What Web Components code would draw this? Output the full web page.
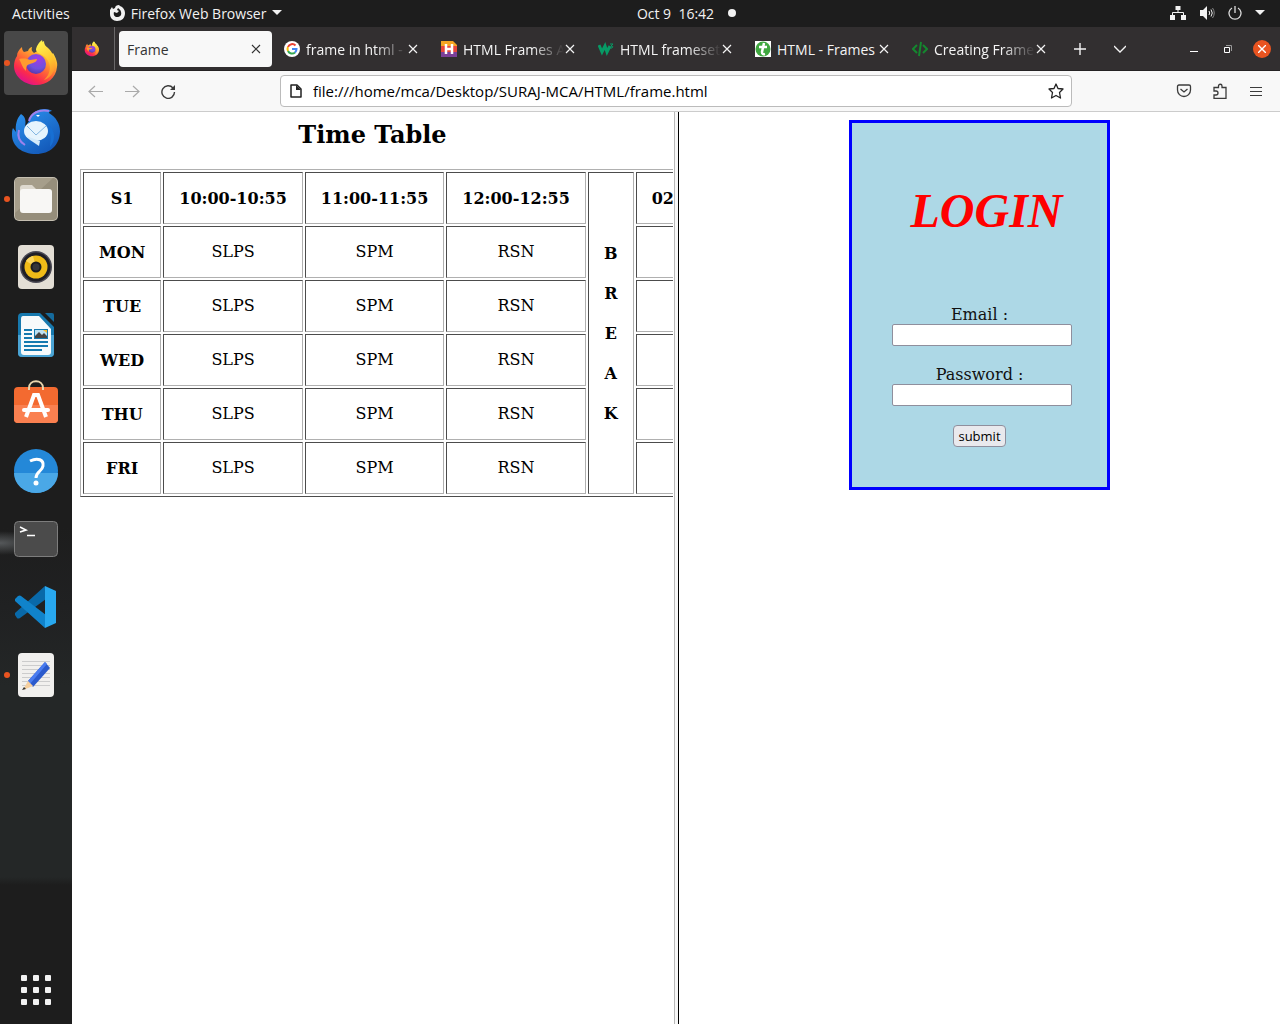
<!DOCTYPE html>
<html lang="en">
<head>
<meta charset="utf-8">
<title>Frame</title>
<style>
html,body{margin:0;height:100%}
body{font-family:"Open Sans","Noto Sans",sans-serif;font-size:14px;overflow:hidden;background:#fff}
</style>
</head>
<body>
<desk-top></desk-top>
<script>
const define = (name, html) => {
  const t = document.createElement('template');
  t.innerHTML = `<style>*{box-sizing:border-box}button{font:inherit;color:inherit;background:none;border:0;padding:0;margin:0}svg{display:block;flex:none}</style>` + html;
  customElements.define(name, class extends HTMLElement {
    constructor() {
      super();
      this.attachShadow({mode: 'open'}).append(t.content.cloneNode(true));
    }
  });
};

const fox = (id, size) => `<svg width="${size}" height="${size}" viewBox="0 0 48 48" aria-hidden="true">
<defs><linearGradient id="${id}a" x1=".8" y1=".05" x2=".25" y2=".95"><stop offset="0" stop-color="#fff44f"/><stop offset=".3" stop-color="#ffb62e"/><stop offset=".55" stop-color="#ff6b35"/><stop offset=".8" stop-color="#fb2b4c"/><stop offset="1" stop-color="#e0118c"/></linearGradient>
<radialGradient id="${id}b" cx=".6" cy=".25" r=".8"><stop offset="0" stop-color="#a13ae6"/><stop offset=".6" stop-color="#6f51dc"/><stop offset="1" stop-color="#5436a8"/></radialGradient>
<linearGradient id="${id}c" x1=".3" y1="0" x2=".6" y2="1"><stop offset="0" stop-color="#fff44f"/><stop offset=".6" stop-color="#ffc22e"/><stop offset="1" stop-color="#ff8a2c"/></linearGradient></defs>
<g transform="translate(1 -1)"><path fill="url(#${id}a)" d="M4 18C4 14 6 12 9 9c0 3 1 4 2 5l4-1c1-3 3-4 4-4-1 3 0 4 2 6l5-3c0-4 3-8 5-9 0 6 5 8 8 13l1-1c3 5 5 10 4 14-1 11-10 18-21 18S1 39 1 28c0-4 1-7 3-10z"/>
<path fill="url(#${id}c)" d="M29 2c1 6 7 7 10 13 6 11 3 23-8 27 7-6 8-16 2-22-3-4-9-4-10-8 0-3 3-8 6-10z"/>
<circle cx="23" cy="26" r="10" fill="url(#${id}b)"/>
<path fill="#ff9b2f" d="M6 21c5-1 9 0 11 1l7-1c0 3-4 4-7 5-4 1-4 4-4 7-4-4-4-7-7-12z"/></g></svg>`;

const closeX = `<svg width="10" height="10" viewBox="0 0 10 10" fill="none" stroke="currentColor" stroke-width="1.200"><path d="M1 1l8 8M9 1L1 9"/></svg>`;

define('top-bar', `<style>
:host{display:grid;grid-template-columns:1fr auto 1fr;align-items:center;height:27px;background:#1d1d1d;color:#f2f2f2;padding:0 15px 1px 12px}
div{display:flex;align-items:center}
.l{gap:39px}.app{display:flex;align-items:center;gap:6px}
.c{gap:14px;padding-left:96px}.c time{white-space:pre}.dot{width:8px;height:8px;border-radius:50%;background:#f2f2f2}
.r{justify-content:flex-end;gap:13px}
</style>
<div class="l"><button>Activities</button><button class="app"><svg width="16" height="16" viewBox="0 0 16 16"><path fill="#f2f2f2" fill-rule="evenodd" d="M1 5l2-3 1 2 2-1C6 1 8 0 10 0l1 1c3 1 5 4 5 7 0 5-3 8-8 8-4 0-7-3-7-7zM5 7c-1 3 1 5 3 5 3 0 5-2 4-5 0-2-2-3-3-4L8 5l2 1-2 2z"/></svg>Firefox Web Browser<svg width="10" height="6" viewBox="0 0 10 6"><path fill="#f2f2f2" d="M0 0h10L5 5z"/></svg></button></div>
<div class="c"><time>Oct 9  16:42</time><span class="dot"></span></div>
<div class="r">
<svg width="16" height="14" viewBox="0 0 16 14"><path fill="#f2f2f2" d="M5.500 0h5v4h-5zM0 9h5v5H0zM11 9h5v5h-5z"/><path fill="none" stroke="#f2f2f2" d="M8 4v3M2.500 9V6.500h11V9"/></svg>
<svg width="16" height="14" viewBox="0 0 16 14"><path fill="#f2f2f2" d="M1 4h3l4-4v14l-4-4H1z"/><path fill="none" stroke="#f2f2f2" d="M10 5q1.500 2 0 4M12 3.500q2.500 3.500 0 7" /><path fill="none" stroke="#888" d="M13.500 2q3.500 5 0 10"/></svg>
<svg width="14" height="14" viewBox="0 0 14 14" fill="none" stroke="#ddd" stroke-width="1.300"><path d="M4 2a6 6 0 1 0 6 0M7 0v7"/></svg>
<svg width="10" height="6" viewBox="0 0 10 6"><path fill="#f2f2f2" d="M0 0h10L5 5z"/></svg></div>`);

define('dock-item', `<style>
:host{display:block}
button{position:relative;display:flex;align-items:center;justify-content:center;width:64px;height:64px;border-radius:4px}
:host([active]) button{background:#484848}
:host([running]) button::before{content:"";position:absolute;left:0;top:29px;width:6px;height:6px;border-radius:50%;background:#e95420}
</style><button><slot></slot></button>`);

define('dock-bar', `<style>
:host{display:flex;flex-direction:column;gap:4px;padding:4px;width:72px;background:radial-gradient(ellipse 44px 12px at 0 516px,#55585a,transparent),linear-gradient(#1d1d1d 0 500px,#202122 580px,#242727 660px,#242727 850px,#1d1d1d 858px)}
.sp{flex:1}
dock-item:last-child{margin-bottom:-2px}
</style>
<dock-item active running>${fox('d', 48)}</dock-item>
<dock-item><svg width="48" height="48" viewBox="0 0 48 48"><defs><linearGradient id="tb" x2=".7" y2="1"><stop offset="0" stop-color="#2d97f3"/><stop offset="1" stop-color="#1358b8"/></linearGradient></defs><g transform="translate(0 1)"><path fill="url(#tb)" d="M9 6c5 3 5 8 4 13l4-6C19 4 26 1 33 1c3 0 6 1 7 2-2 0-3 1-3 2 7 4 11 11 11 18 0 14-10 23-24 23S0 38 0 27c0-3 0-5 1-7l3 4C3 17 5 10 9 6z"/><path fill="none" stroke="#9d82ec" stroke-width="2" d="M17 13c2-8 10-12 20-10M7 22c-2 7 1 12 6 15"/><path fill="#fff" d="M24 7h4l-2 2z"/><ellipse cx="24" cy="23" rx="12" ry="10" fill="#e6f4fd"/><path fill="#d3eafa" d="M14 28l14 5-1 5-9-6z"/><path stroke="#83b6e1" fill="none" d="M15 18l9 9 10-9"/><path fill="#176fd3" d="M37 17c6 6 7 15 1 22 0-5 2-11-1-16z"/></g></svg></dock-item>
<dock-item running><svg width="44" height="44" viewBox="0 0 44 44"><rect width="44" height="44" rx="5" fill="#c5bfb1"/><rect x="1" y="1" width="42" height="42" rx="4" fill="#968e7b"/><path fill="#a69e8b" d="M1 36V5q0-4 4-4h34z"/><path fill="#ded9cf" d="M6 24V11q0-3 3-3h9l4 4v10z"/><rect x="6" y="12" width="32" height="24" rx="3" fill="#f8f7f5"/></svg></dock-item>
<dock-item><svg width="36" height="44" viewBox="0 0 36 44"><rect width="36" height="44" rx="4" fill="#e3ded5"/><circle cx="18" cy="22" r="16" fill="#4a4954"/><circle cx="18" cy="22" r="14.500" fill="#1f1e25"/><circle cx="18" cy="22" r="11.500" fill="#f0bb18"/><path fill="#fbd65e" d="M18 22L8 16a11.500 11.500 0 0 1 7-5z"/><circle cx="18" cy="22" r="5.500" fill="#1c1c1f"/><circle cx="18" cy="22" r="3.500" fill="#34353a"/></svg></dock-item>
<dock-item><svg width="36" height="44" viewBox="0 0 36 44"><path fill="#1779ae" d="M4 0h18l14 14v26q0 4-4 4H4q-4 0-4-4V4q0-4 4-4z"/><path fill="#4ba4d4" d="M0 22h36v18q0 4-4 4H4q-4 0-4-4z"/><path fill="#f7fafb" d="M5 3h16l12 13v23q0 3-3 3H6q-3 0-3-3V6q0-3 2-3z"/><path fill="#156b9d" d="M27 0h7q2 0 2 2v7z"/><path stroke="#1479af" stroke-width="2" d="M6 17h8M6 21h8M6 25h8M6 29h24M6 33h24M6 37h18"/><path fill="#1479af" d="M16 16h14v10H16z"/><path fill="#bce1f3" d="M17 17h12v8H17z"/><path fill="#444" d="M17 25v-2l4-4 3 3 2-2 3 3v2z"/><path fill="#f7bd31" d="M25 17h4v3z"/></svg></dock-item>
<dock-item><svg width="44" height="48" viewBox="0 0 44 48"><path fill="#f36a30" d="M4 8h36q4 0 4 4v28q0 4-4 4H4q-4 0-4-4V12q0-4 4-4z"/><path fill="#fa8050" d="M0 26h44v14q0 4-4 4H4q-4 0-4-4z"/><path fill="none" stroke="#ead6ae" stroke-width="2" d="M15 11v-2c0-9 14-9 14 0v2"/><path fill="none" stroke="#fff" stroke-width="4" d="M12 38l8-22h4l8 22"/><path stroke="#fff" stroke-width="4" stroke-linecap="round" d="M10 31h24"/></svg></dock-item>
<dock-item><svg width="44" height="44" viewBox="0 0 44 44"><circle cx="22" cy="22" r="22" fill="#2488d8"/><path fill="#4aa8e7" d="M0 24h44a22 20 0 0 1-44 0"/><path fill="none" stroke="#fff" stroke-width="3" d="M16 12c8-4 14-1 13 5s-7 5-7 12"/><circle cx="22" cy="34" r="2.500" fill="#fff"/></svg></dock-item>
<dock-item><svg width="44" height="36" viewBox="0 0 44 36"><rect x=".5" y=".5" width="43" height="35" rx="4" fill="#4b4b4b" stroke="#7d7d7d"/><path fill="none" stroke="#fff" stroke-width="1.600" d="M6 6l6 3-6 2M13 14.500h8"/></svg></dock-item>
<dock-item><svg width="44" height="42" viewBox="0 0 44 42"><path fill="#0969a9" d="M1 27l30-27 1 13L6 32q-2 1-3 0l-2-3z"/><path fill="#1083cb" d="M1 13l3-3q2-1 3 0l25 19-1 13L1 15z"/><path fill="#28a8ef" d="M31 0l11 5v32l-11 5z"/></svg></dock-item>
<dock-item running><svg width="36" height="44" viewBox="0 0 36 44"><rect width="36" height="44" rx="4" fill="#f1f0ee"/><path stroke="#ccc" d="M4 8.500h28M4 12.500h28M4 16.500h28M4 20.500h28M4 24.500h28M4 28.500h28M4 32.500h28"/><path fill="#2b5acc" d="M10 28L27 9l5 6-17 19z"/><path fill="#4a7cf0" d="M10 28L27 9l2 2-17 20z"/><path fill="#f5cf9f" d="M10 28l5 5-10 4z"/><path fill="#333" d="M6 34l2 2-4 1z"/></svg></dock-item>
<span class="sp"></span>
<dock-item><svg width="30" height="30" viewBox="0 0 30 30" fill="#f2f2f2"><rect width="6" height="6" rx="1"/><rect x="12" width="6" height="6" rx="1"/><rect x="24" width="6" height="6" rx="1"/><rect y="12" width="6" height="6" rx="1"/><rect x="12" y="12" width="6" height="6" rx="1"/><rect x="24" y="12" width="6" height="6" rx="1"/><rect y="24" width="6" height="6" rx="1"/><rect x="12" y="24" width="6" height="6" rx="1"/><rect x="24" y="24" width="6" height="6" rx="1"/></svg></dock-item>`);

define('browser-tab', `<style>
:host{display:flex;align-items:center;gap:6px;flex:0 1 153px;min-width:0;height:36px;padding:0 11px 0 8px;border-radius:4px;color:#f4f4f4}
:host([active]){background:#f8f8f8;color:#333}
.t{flex:1;min-width:0;padding-top:1px;overflow:hidden;white-space:nowrap;-webkit-mask-image:linear-gradient(to left,transparent 0,#000 32px);mask-image:linear-gradient(to left,transparent 0,#000 32px)}
:host([whole]) .t{-webkit-mask-image:none;mask-image:none}
button{margin-left:-5px}
</style><slot name="icon"></slot><span class="t"><slot></slot></span><button aria-label="Close tab">${closeX}</button>`);

define('tab-strip', `<style>
:host{display:flex;align-items:center;height:44px;background:#322f30;color:#f4f4f4;padding-right:9px;border-bottom:1px solid #242223}
.pin{width:43px;height:43px;padding:0 15px 0 12px;border-right:1px solid #6a6869;display:flex;align-items:center;flex:none}
.tabs{display:flex;gap:4px;flex:0 1 942px;min-width:0;padding-left:4px}
.ctl{display:flex;align-items:center;gap:28px;margin-left:17px}
.win{display:flex;align-items:center;gap:17px;margin-left:auto}
.x{display:flex;align-items:center;justify-content:center;width:18px;height:18px;border-radius:50%;background:#e95420}
</style>
<div class="pin">${fox('p', 16)}</div>
<div class="tabs">
<browser-tab active whole>Frame</browser-tab>
<browser-tab><svg slot="icon" width="16" height="16" viewBox="0 0 16 16"><circle cx="8" cy="8" r="8" fill="#fff"/><g fill="none" stroke-width="2"><path stroke="#ea4335" d="M4 6a4.500 4.500 0 0 1 7.500-1.500"/><path stroke="#fbbc05" d="M4 10a4.500 4.500 0 0 1 0-4"/><path stroke="#34a853" d="M4 10a4.500 4.500 0 0 0 7 1.500"/><path stroke="#4285f4" d="M8 8h4.500q0 2-1.500 3.500"/></g></svg>frame in html - Google</browser-tab>
<browser-tab><svg slot="icon" width="16" height="16" viewBox="0 0 16 16"><path fill="#f6a623" d="M0 0h12l4 4v1H0z"/><path fill="#e8483b" d="M0 5h16v6H0z"/><path fill="#7b3f98" d="M0 11h16v5H0z"/><path fill="none" stroke="#fff" stroke-width="2.500" d="M5 3v10M11 3v10M5 8h6"/></svg>HTML Frames And</browser-tab>
<browser-tab><svg slot="icon" width="16" height="16" viewBox="0 0 16 16"><path fill="none" stroke="#079a65" stroke-width="3" d="M1 4l3 7 3-6 2 6 3-6"/><path fill="none" stroke="#079a65" d="M12 3h3l-2 2q3 0 1 2h-2"/></svg>HTML frameset tag</browser-tab>
<browser-tab whole><svg slot="icon" width="16" height="16" viewBox="0 0 16 16"><path fill="#fff" d="M0 0h16v16H0z"/><circle cx="8" cy="8" r="7.500" fill="#3fa73f"/><path fill="none" stroke="#fff" stroke-width="2.500" d="M9 2L7 11q0 3 3 2M4 6h8"/></svg>HTML - Frames</browser-tab>
<browser-tab><svg slot="icon" width="16" height="16" viewBox="0 0 16 16" fill="none" stroke="#14882f" stroke-width="2"><path d="M5 4L1 8l4 4M11 4l4 4-4 4M9 1L7 15"/></svg>Creating Frames</browser-tab>
</div>
<div class="ctl"><button aria-label="New tab"><svg width="12" height="12" viewBox="0 0 12 12"><path stroke="currentColor" stroke-width="1.400" d="M6 0v12M0 6h12"/></svg></button><button aria-label="List tabs"><svg width="12" height="8" viewBox="0 0 12 8"><path fill="none" stroke="currentColor" stroke-width="1.300" d="M0 1l6 6 6-6"/></svg></button></div>
<div class="win"><button aria-label="Minimise"><svg width="16" height="8" viewBox="0 0 16 8"><path stroke="#fff" d="M3 6.500h8"/></svg></button><button aria-label="Restore"><svg width="16" height="8" viewBox="0 0 16 8"><path fill="none" stroke="#fff" d="M4.500 2.500h5v5h-5z"/><path fill="none" stroke="#999" d="M6 .5h5.500V6"/></svg></button><button class="x" aria-label="Close"><svg width="8" height="8" viewBox="0 0 8 8"><path stroke="#fff" stroke-width="1.400" d="M0 0l8 8M8 0L0 8"/></svg></button></div>`);

define('nav-bar', `<style>
:host{display:flex;align-items:center;height:41px;background:#f8f8f8;border-bottom:1px solid #ccc;color:#3b3b3b}
.s{display:flex;gap:20px;width:208px;padding:0 16px}
.s.r{justify-content:flex-end}
.url{flex:1;display:flex;align-items:center;gap:10px;height:32px;background:#fff;border:1px solid #bbb;border-radius:4px;padding:0 7px 0 8px;color:#222}
input{flex:1;min-width:0;border:0;padding:0;background:none;outline:0;font:inherit;font-size:15px;color:#000}
button:disabled{color:#aaa}
</style>
<div class="s"><button disabled aria-label="Back"><svg width="16" height="16" viewBox="0 0 16 16" fill="none" stroke="currentColor" stroke-width="1.200"><path d="M15 8.500H1.500M7 3L1 8.500 7 14"/></svg></button><button disabled aria-label="Forward"><svg width="16" height="16" viewBox="0 0 16 16" fill="none" stroke="currentColor" stroke-width="1.200"><path d="M1 8.500h13.500M9 3l6 5.500L9 14"/></svg></button><button aria-label="Reload"><svg width="16" height="16" viewBox="0 0 16 16"><path fill="none" stroke="currentColor" stroke-width="1.400" d="M13 5a6.300 6.300 0 1 0 1.500 4"/><path fill="currentColor" d="M15 2v5h-5z"/></svg></button></div>
<div class="url"><svg width="14" height="14" viewBox="0 0 14 14"><path fill="none" stroke="#222" stroke-width="1.500" stroke-linejoin="round" d="M2 1h6l4 4v8H2z"/><path fill="#222" d="M7 1l5 5H7z"/></svg><input aria-label="Address" value="file:///home/mca/Desktop/SURAJ-MCA/HTML/frame.html"><button aria-label="Bookmark"><svg width="16" height="16" viewBox="0 0 16 16"><path fill="none" stroke="#222" stroke-width="1.300" stroke-linejoin="round" d="M8 1l2 4.500 5 .5-3.500 3.500 1 5.500L8 12.500 3.500 15l1-5.500L1 6l5-.5z"/></svg></button></div>
<div class="s r"><button aria-label="Pocket"><svg width="16" height="16" viewBox="0 0 16 16" fill="none" stroke="currentColor" stroke-width="1.300"><path d="M3 2h10q1.500 0 1.500 1.500V7a6.500 6.500 0 0 1-13 0V3.500Q1.500 2 3 2zM4.500 6L8 9l3.500-3"/></svg></button><button aria-label="Extensions"><svg width="16" height="16" viewBox="0 0 16 16" fill="none" stroke="currentColor" stroke-width="1.300"><path d="M2 15.300V12h2a2 2 0 0 0 0-4H2V4.500h4.500V3a1.700 1.700 0 0 1 3.500 0v1.500h4v10.800z"/></svg></button><button aria-label="Menu"><svg width="16" height="16" viewBox="0 0 16 16"><path stroke="currentColor" stroke-width="1" d="M2 4.500h12M2 8.500h12M2 12.500h12"/></svg></button></div>`);

const days = ['MON', 'TUE', 'WED', 'THU', 'FRI'];
define('time-table', `<style>
:host{display:block;padding:8px;overflow:hidden;min-width:0;font-family:"DejaVu Serif",serif;font-size:16px;line-height:20px;color:#000}
h2{margin:0 0 20px;font-size:24px;line-height:29px;text-align:center}
table{border:1px solid;border-color:#b0b0b0 #4c4c4c #4c4c4c #b0b0b0;border-spacing:2px;border-collapse:separate}
th,td{padding:15px;border:1px solid;border-color:#4c4c4c #b0b0b0 #b0b0b0 #4c4c4c;text-align:center;white-space:nowrap}
th{padding:16px 15px 14px}
</style>
<h2>Time Table</h2>
<table><tbody><tr><th>S1</th><th>10:00-10:55</th><th>11:00-11:55</th><th>12:00-12:55</th><th rowspan="6">B<br><br>R<br><br>E<br><br>A<br><br>K</th><th>02:00-02:55</th></tr>
${days.map(d => `<tr><th>${d}</th><td>SLPS</td><td>SPM</td><td>RSN</td><td></td></tr>`).join('')}</tbody></table>`);

define('login-form', `<style>
:host{display:block;padding:8px;font-family:"DejaVu Serif",serif;font-size:16px;line-height:20px;color:#111}
form{box-sizing:content-box;width:175px;margin:0 auto;padding:40px;border:3px solid #00f;background:#add8e6;text-align:center}
h1{margin:0 0 45px;padding-left:14px;font:italic bold 48px/96px "Z003","URW Chancery L","Liberation Serif",serif;color:red}
label{display:block;height:20px;line-height:22px}
input{display:block;width:180px;height:22px;margin:0 0 18px;border:1px solid #8f8f9d;border-radius:2px;background:#fff}
button{height:22px;padding:0 4px;border:1px solid #8f8f9d;border-radius:4px;background:#e9e9ed;font:13px/20px "Open Sans","Noto Sans",sans-serif;color:#000;display:block;margin:19px auto 0}
</style>
<form><h1>LOGIN</h1><label for="e">Email :</label><input id="e" type="email"><label for="p">Password :</label><input id="p" type="password"><button type="button">submit</button></form>`);

define('frame-set', `<style>
:host{display:grid;grid-template-columns:minmax(0,1fr) 6px minmax(0,1fr);background:#fff;min-height:0}
.bar{border:solid;border-width:0 1px 0 0;border-color:#000;background:linear-gradient(90deg,#fff 1px,#b8b8b8 1px 2px,#f8f8f8 2px)}
</style><time-table></time-table><div class="bar"></div><login-form></login-form>`);

define('browser-window', `<style>
:host{display:flex;flex-direction:column;min-width:0}
frame-set{flex:1}
</style><tab-strip></tab-strip><nav-bar></nav-bar><frame-set></frame-set>`);

define('desk-top', `<style>
:host{display:grid;grid-template:27px minmax(0,1fr)/72px minmax(0,1fr);height:100vh}
top-bar{grid-column:1/3}
</style><top-bar></top-bar><dock-bar></dock-bar><browser-window></browser-window>`);
</script>
</body>
</html>
